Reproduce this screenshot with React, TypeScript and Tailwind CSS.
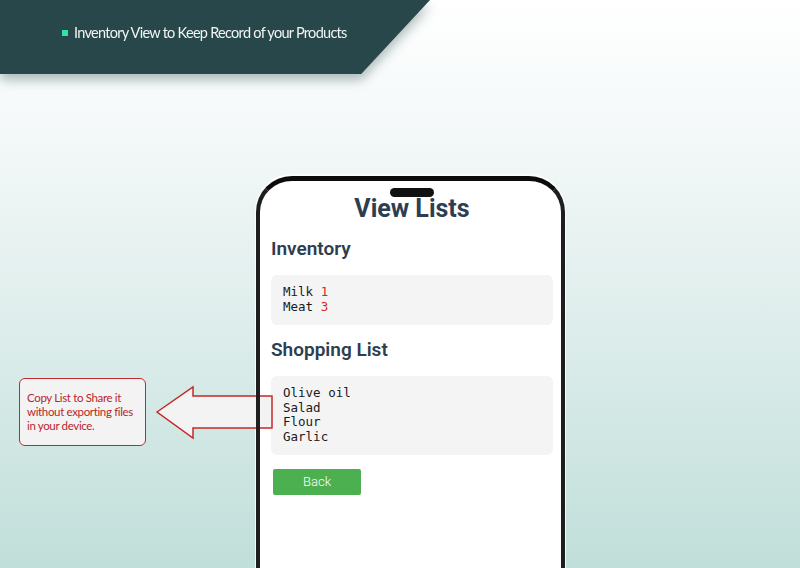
export default function App() {
  const inventory = [
    { name: "Milk", qty: 1 },
    { name: "Meat", qty: 3 },
  ];
  const shopping = ["Olive oil", "Salad", "Flour", "Garlic"];

  return (
    <main className="relative h-[568px] w-[800px] overflow-hidden bg-[linear-gradient(180deg,#ffffff_0%,#f3f8f8_25%,#c1dfda_100%)]">
      {/* top banner */}
      <div className="drop-shadow-[0_6px_6px_rgba(30,60,60,0.35)]">
        <div className="flex h-[74px] w-[430px] items-center bg-[#27474a] pb-[8px] pl-[62px] [clip-path:polygon(0_0,100%_0,84%_100%,0_100%)]">
          <span className="mr-[6px] h-[6px] w-[6px] bg-[#2ee6a0]" />
          <span className="font-['Lato','Open_Sans',sans-serif] text-[14.5px] tracking-[-0.72px] text-[#f1f5f4]">
            Inventory View to Keep Record of your Products
          </span>
        </div>
      </div>

      {/* phone */}
      <section className="ml-[256px] mt-[102px] h-[400px] w-[309px] rounded-t-[36px] border-x-[4px] border-t-[5px] border-x-[#1e1e1e] border-t-[#0c0c0c] bg-white shadow-[0_-1px_0_1px_rgba(255,255,255,0.8)]">
        <div className="flex flex-col pl-[11px] pr-[8px] font-['Roboto','Inter',sans-serif]">
          <div className="mx-auto mt-[7px] h-[9px] w-[44px] rounded-full bg-[#111]" />
          <h1 className="-mt-[2px] text-center text-[25px] font-bold leading-[28px] text-[#2c3e50]">View Lists</h1>
          <h2 className="mt-[14px] text-[19px] font-semibold leading-[24px] text-[#2c3e50]">Inventory</h2>
          <pre className="mt-[14px] h-[50px] rounded-[6px] bg-[#f4f4f4] px-[12px] py-[10px] font-['DejaVu_Sans_Mono',monospace] text-[12.5px] leading-[14.5px] text-[#1a1a1a]">
            {inventory.map((item) => (
              <div key={item.name}>
                {item.name} <span className="text-[#d3262b]">{item.qty}</span>
              </div>
            ))}
          </pre>
          <h2 className="mt-[13px] text-[19px] font-semibold leading-[24px] text-[#2c3e50]">Shopping List</h2>
          <pre className="mt-[14px] h-[79px] rounded-[6px] bg-[#f4f4f4] px-[12px] py-[10px] font-['DejaVu_Sans_Mono',monospace] text-[12.5px] leading-[14.5px] text-[#1a1a1a]">
            {shopping.map((s) => (
              <div key={s}>{s}</div>
            ))}
          </pre>
          <button className="ml-[2px] mt-[14px] h-[26px] w-[88px] rounded-[2px] bg-[#4caf50] text-[13px] font-light text-white">
            Back
          </button>
        </div>
      </section>

      {/* callout */}
      <div className="absolute left-[19px] top-[378px] h-[68px] w-[127px] rounded-[6px] border-[1.5px] border-[#c0282d] bg-[#f3f3f3] pl-[7px] pr-[2px] pt-[12px] font-['Lato','Open_Sans',sans-serif] text-[11.5px] leading-[14px] tracking-[-0.35px] text-[#b8262b]">
        Copy List to Share it without exporting files in your device.
      </div>
      <svg className="absolute left-[150px] top-[380px]" width="130" height="65" viewBox="150 380 130 65">
        <polygon
          points="157,412 193,387 193,396 272,396 272,428 193,428 193,438"
          fill="#f3f3f3"
          stroke="#c62828"
          strokeWidth="1.5"
          strokeLinejoin="miter"
        />
        <line x1="258" y1="380" x2="258" y2="445" stroke="#1e1e1e" strokeWidth="4" />
      </svg>
    </main>
  );
}
